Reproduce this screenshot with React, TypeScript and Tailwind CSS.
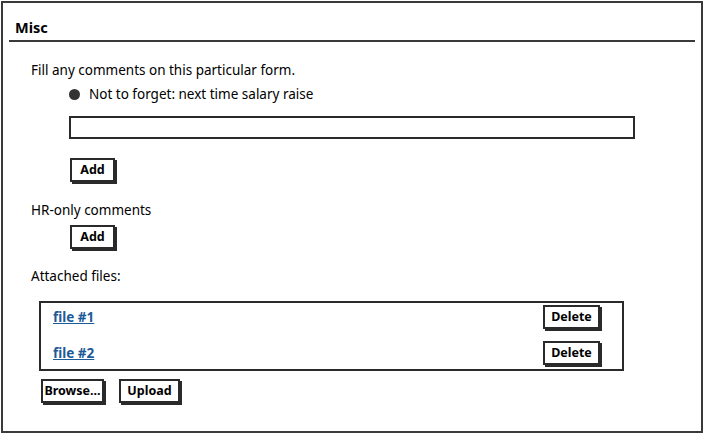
const font = { fontFamily: '"Noto Sans", "DejaVu Sans", sans-serif' }

function Btn({ label, className = '' }: { label: string; className?: string }) {
  return (
    <button
      className={`h-[24px] border-2 border-[#2a2a2a] bg-white text-[12.5px] font-bold text-black leading-none shadow-[2px_2px_0_#2a2a2a] whitespace-nowrap ${className}`}
    >
      {label}
    </button>
  )
}

export default function App() {
  return (
    <div className="w-[704px] h-[434px] bg-white p-[1px] text-black" style={font}>
      <div className="h-full border-2 border-[#3a3a3a] px-[6px]">
        <div className="h-[39px] flex items-end pb-[3px] pl-[6px] border-b-2 border-[#3a3a3a]">
          <span className="text-[14.5px] font-bold leading-[20px]">Misc</span>
        </div>

        <div className="pl-[22px] pt-[19px] text-[13.5px]">
          <p className="leading-[18px]">Fill any comments on this particular form.</p>
          <div className="mt-[6px] flex items-center h-[18px] pl-[38px] gap-[9px]">
            <span className="w-[11px] h-[11px] rounded-full bg-[#333]" />
            <span>Not to forget: next time salary raise</span>
          </div>
          <div className="mt-[13px] ml-[38px] w-[566px] h-[23px] border-2 border-[#2a2a2a]" />
          <Btn label="Add" className="mt-[19px] ml-[39px] w-[45px]" />

          <p className="mt-[19px] leading-[18px]">HR-only comments</p>
          <Btn label="Add" className="mt-[6px] ml-[39px] w-[45px]" />

          <p className="mt-[18px] leading-[18px]">Attached files:</p>

          <div className="mt-[16px] ml-[8px] w-[585px] border-2 border-[#2a2a2a] pl-[12px] pr-[22px] pt-[2px] pb-[4px] flex flex-col gap-[12px]">
            {['file #1', 'file #2'].map(f => (
              <div key={f} className="flex items-center justify-between h-[24px]">
                <a className="text-[#1d5a98] underline font-bold text-[13.5px]">{f}</a>
                <Btn label="Delete" className="w-[57px]" />
              </div>
            ))}
          </div>

          <div className="mt-[8px] ml-[10px] flex gap-[15px]">
            <Btn label="Browse..." className="w-[63px]" />
            <Btn label="Upload" className="w-[61px]" />
          </div>
        </div>
      </div>
    </div>
  )
}
